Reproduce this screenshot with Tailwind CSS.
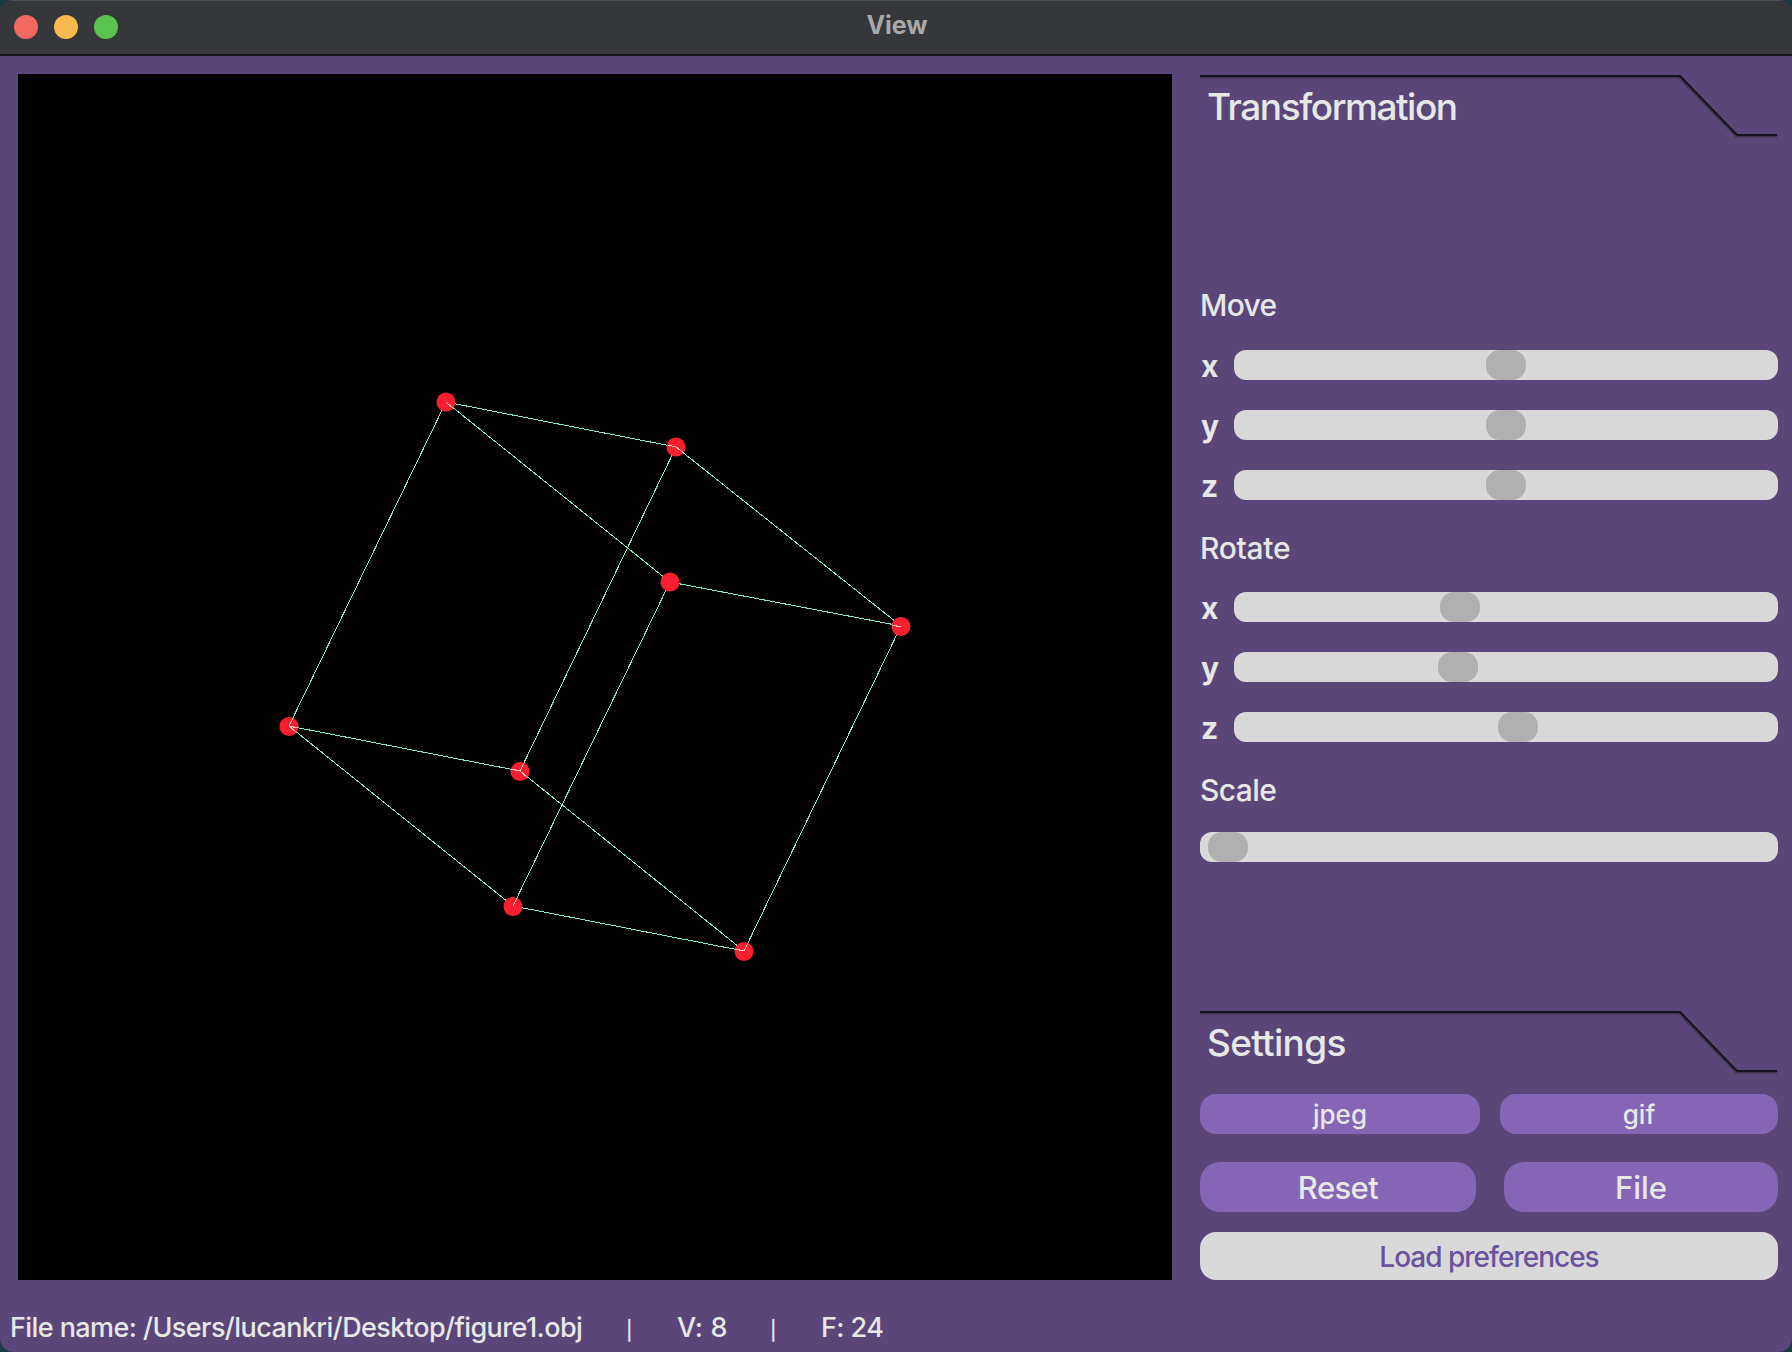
<!DOCTYPE html>
<html lang="en">
<head>
    <meta charset="UTF-8">
    <title>View</title>
    <script src="https://cdn.jsdelivr.net/npm/@tailwindcss/browser@4"></script>
</head>
<body class="bg-[#1d3a44] font-['Inter',sans-serif]">
    <div class="w-[1792px] h-[1352px] flex flex-col bg-[#5b4679] rounded-[14px] overflow-hidden">
        <!-- title bar -->
        <div class="relative h-[56px] shrink-0 flex items-center pl-[14px] gap-[16px] bg-[#36373a] border-b-2 border-[#16151a] shadow-[inset_0_1px_0_#4e4f52]">
            <div class="w-[24px] h-[24px] rounded-full bg-[#f0685f]"></div>
            <div class="w-[24px] h-[24px] rounded-full bg-[#f5b94e]"></div>
            <div class="w-[24px] h-[24px] rounded-full bg-[#5ac251]"></div>
            <div class="absolute inset-x-0 top-0 h-[51px] pl-[2px] flex items-center justify-center text-[25px] font-bold text-[#a9a9ab]">View</div>
        </div>

        <div class="flex-1 flex pl-[18px] pr-[14px] pt-[18px]">
            <!-- viewport -->
            <svg class="w-[1154px] h-[1206px] shrink-0 bg-black" viewBox="18 74 1154 1206" shape-rendering="crispEdges">
                <g stroke="#86ead3" stroke-width="1" fill="none">
                    <path d="M446 402L676 447M446 402L670 582M676 447L901 626M670 582L901 626"/>
                    <path d="M446 402L289 726M676 447L520 771M670 582L513 906M901 626L744 951"/>
                    <path d="M289 726L520 771M289 726L513 906M520 771L744 951M513 906L744 951"/>
                </g>
                <g fill="#f91f2f" shape-rendering="auto">
                    <circle cx="446" cy="402" r="9.5"/>
                    <circle cx="676" cy="447" r="9.5"/>
                    <circle cx="670" cy="582" r="9.5"/>
                    <circle cx="901" cy="626.5" r="9.5"/>
                    <circle cx="289" cy="726.5" r="9.5"/>
                    <circle cx="520" cy="771.5" r="9.5"/>
                    <circle cx="513" cy="906.5" r="9.5"/>
                    <circle cx="744" cy="951.5" r="9.5"/>
                </g>
                <!-- edge ends that show through the vertex dots -->
                <g stroke="#f6c8c2" stroke-width="1" fill="none">
                    <path d="M446 402L454 409"/>
                    <path d="M668 445L676 447L684 453"/>
                    <path d="M892 625L901 627"/>
                    <path d="M293 718L289 726L298 728M289 726L296 732"/>
                    <path d="M511 769L520 771L527 777M520 771L524 763"/>
                    <path d="M513 906L517 898"/>
                    <path d="M735 949L744 951L748 943"/>
                </g>
            </svg>

            <!-- side panel -->
            <div class="ml-[28px] w-[578px] h-[1206px] flex flex-col text-[#e6e8e6] font-[450]">
                <div class="relative h-[62px] shrink-0">
                    <svg class="absolute left-0 top-0" width="578" height="66" fill="none">
                        <path d="M0 3.5H479L536 62.5H577" stroke="#403850" stroke-width="2"/>
                        <path d="M0 2H480L537 61H577" stroke="#15121c" stroke-width="2"/>
                    </svg>
                    <div class="pl-[7px] pt-[11px] text-[37px] leading-[44px] tracking-[-1.45px]">Transformation</div>
                </div>

                <div class="mt-[151px] text-[30px] leading-[36px] tracking-[-0.7px]">Move</div>
                <div class="mt-[27px] flex flex-col gap-[30px]">
                    <div class="flex items-center h-[30px]">
                        <span class="w-[34px] h-[30px] pt-[1px] text-[30px] leading-[30px] font-bold pl-[1px]">x</span>
                        <div class="relative flex-1 h-[30px] rounded-[12px] bg-[#d9d9d9]"><div class="absolute top-0 left-[252px] w-[40px] h-[30px] rounded-[14px] bg-[#b0b0b0]"></div></div>
                    </div>
                    <div class="flex items-center h-[30px]">
                        <span class="w-[34px] h-[30px] pt-[1px] text-[30px] leading-[30px] font-bold pl-[1px]">y</span>
                        <div class="relative flex-1 h-[30px] rounded-[12px] bg-[#d9d9d9]"><div class="absolute top-0 left-[252px] w-[40px] h-[30px] rounded-[14px] bg-[#b0b0b0]"></div></div>
                    </div>
                    <div class="flex items-center h-[30px]">
                        <span class="w-[34px] h-[30px] pt-[1px] text-[30px] leading-[30px] font-bold pl-[1px]">z</span>
                        <div class="relative flex-1 h-[30px] rounded-[12px] bg-[#d9d9d9]"><div class="absolute top-0 left-[252px] w-[40px] h-[30px] rounded-[14px] bg-[#b0b0b0]"></div></div>
                    </div>
                </div>

                <div class="mt-[30px] text-[30px] leading-[36px] tracking-[-0.3px]">Rotate</div>
                <div class="mt-[26px] flex flex-col gap-[30px]">
                    <div class="flex items-center h-[30px]">
                        <span class="w-[34px] h-[30px] pt-[1px] text-[30px] leading-[30px] font-bold pl-[1px]">x</span>
                        <div class="relative flex-1 h-[30px] rounded-[12px] bg-[#d9d9d9]"><div class="absolute top-0 left-[206px] w-[40px] h-[30px] rounded-[14px] bg-[#b0b0b0]"></div></div>
                    </div>
                    <div class="flex items-center h-[30px]">
                        <span class="w-[34px] h-[30px] pt-[1px] text-[30px] leading-[30px] font-bold pl-[1px]">y</span>
                        <div class="relative flex-1 h-[30px] rounded-[12px] bg-[#d9d9d9]"><div class="absolute top-0 left-[204px] w-[40px] h-[30px] rounded-[14px] bg-[#b0b0b0]"></div></div>
                    </div>
                    <div class="flex items-center h-[30px]">
                        <span class="w-[34px] h-[30px] pt-[1px] text-[30px] leading-[30px] font-bold pl-[1px]">z</span>
                        <div class="relative flex-1 h-[30px] rounded-[12px] bg-[#d9d9d9]"><div class="absolute top-0 left-[264px] w-[40px] h-[30px] rounded-[14px] bg-[#b0b0b0]"></div></div>
                    </div>
                </div>

                <div class="mt-[30px] text-[30px] leading-[36px] tracking-[-0.6px]">Scale</div>
                <div class="mt-[24px] relative h-[30px] shrink-0 rounded-[12px] bg-[#d9d9d9]"><div class="absolute top-0 left-[8px] w-[40px] h-[30px] rounded-[14px] bg-[#b0b0b0]"></div></div>

                <div class="relative mt-[148px] h-[63px] shrink-0">
                    <svg class="absolute left-0 top-0" width="578" height="66" fill="none">
                        <path d="M0 3.5H479L536 62.5H577" stroke="#403850" stroke-width="2"/>
                        <path d="M0 2H480L537 61H577" stroke="#15121c" stroke-width="2"/>
                    </svg>
                    <div class="pl-[7px] pt-[11px] text-[37px] leading-[44px] tracking-[-0.7px]">Settings</div>
                </div>

                <div class="mt-[21px] flex gap-[20px]">
                    <button class="w-[280px] h-[40px] pt-[2px] rounded-[16px] bg-[#8565b5] text-[26px] leading-none">jpeg</button>
                    <button class="flex-1 h-[40px] pt-[2px] rounded-[16px] bg-[#8565b5] text-[26px] leading-none">gif</button>
                </div>
                <div class="mt-[28px] flex gap-[28px]">
                    <button class="w-[276px] h-[50px] rounded-[20px] bg-[#8565b5] text-[31px] leading-none tracking-[-0.6px]">Reset</button>
                    <button class="flex-1 h-[50px] rounded-[20px] bg-[#8565b5] text-[31px] leading-none">File</button>
                </div>
                <button class="mt-[20px] h-[48px] pt-[2px] shrink-0 rounded-[16px] bg-[#d9d9d9] text-[#6b529c] text-[28px] leading-none tracking-[-1px]">Load preferences</button>
            </div>
        </div>

        <!-- status line -->
        <div class="h-[72px] shrink-0 flex items-center pt-[24px] pl-[10px] text-[27px] font-[450] leading-[36px] tracking-[-0.58px] text-[#e6e8e6] whitespace-nowrap">
            <span class="w-[616px]">File name: /Users/lucankri/Desktop/figure1.obj</span>
            <span class="w-[51px] pt-[5px] text-[19px] font-medium">|</span>
            <span class="w-[93px] tracking-[0.2px]">V: 8</span>
            <span class="w-[51px] pt-[5px] text-[19px] font-medium">|</span>
            <span>F: 24</span>
        </div>
    </div>
</body>
</html>
